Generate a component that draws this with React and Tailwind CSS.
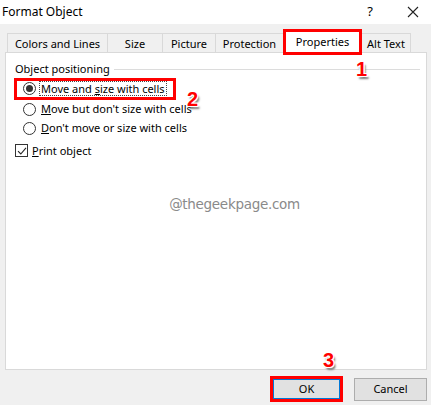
import React from 'react';

const badge = "absolute font-bold text-[20px] leading-none text-[#ff0000] [font-family:'Liberation_Sans',Arial,sans-serif] [text-shadow:1px_1px_0_#fff,-1px_-1px_0_#fff,1px_-1px_0_#fff,-1px_1px_0_#fff,0_1px_0_#fff,1px_0_0_#fff,2px_3px_2px_#777]";

const Tab = ({ label, width }) => (
    <div className={`h-[19px] border border-b-0 border-[#d9d9d9] -ml-px first:ml-0 flex items-center justify-center ${width}`}>
        {label}
    </div>
);

const Radio = ({ checked, children }) => (
    <div className="flex items-center h-[19px] whitespace-nowrap">
        <span className="w-[13px] h-[13px] rounded-full border border-[#333] bg-white flex items-center justify-center ml-[8px] mr-[4px]">
            {checked && <span className="w-[7px] h-[7px] rounded-full bg-[#333]" />}
        </span>
        {children}
    </div>
);

const App = () => {
    return (
        <div className="relative w-[431px] h-[405px] bg-[#f0f0f0] text-[11px] text-black overflow-hidden [font-family:'Noto_Sans','Open_Sans',sans-serif]">
            {/* title bar */}
            <div className="h-[24px] bg-white flex items-center pl-[2px]">
                <span className="text-[12px]">Format Object</span>
                <span className="ml-auto mr-[34px] text-[13px]">?</span>
                <svg width="12" height="12" viewBox="0 0 12 12" className="mr-[12px]">
                    <path d="M1 1L11 11M11 1L1 11" stroke="#222" strokeWidth="1.1" />
                </svg>
            </div>

            {/* tabs */}
            <div className="flex items-end h-[28px] pl-[7px] leading-none">
                <Tab label="Colors and Lines" width="w-[101px]" />
                <Tab label="Size" width="w-[56px]" />
                <Tab label="Picture" width="w-[54px]" />
                <Tab label="Protection" width="w-[69px]" />
                <div className="relative z-10 -ml-px -mb-[3px] w-[79px] h-[26px] bg-white border-[3px] border-[#ff0000] flex items-center justify-center pb-[2px]">
                    Properties
                </div>
                <Tab label="Alt Text" width="w-[50px] -ml-[1px]" />
            </div>

            {/* panel */}
            <div className="ml-[5px] w-[422px] h-[318px] bg-white border border-[#d9d9d9] pt-[8px] pl-[9px] pr-[6px]">
                <div className="flex items-center">
                    <span className="pr-[4px]">Object positioning</span>
                    <span className="flex-1 h-px bg-[#dcdcdc]" />
                </div>
                <div className="mt-0 w-[162px] h-[22px] -ml-[1px] border-[3px] border-[#ff0000] flex items-center whitespace-nowrap">
                    <span className="w-[13px] h-[13px] rounded-full border border-[#333] bg-white flex items-center justify-center ml-[6px] mr-[3px]">
                        <span className="w-[7px] h-[7px] rounded-full bg-[#333]" />
                    </span>
                    <span className="border border-dotted border-[#444] px-px leading-[13px]">
                        Move and <u>s</u>ize with cells
                    </span>
                </div>
                <Radio><span className="ml-px"><u>M</u>ove but don't size with cells</span></Radio>
                <Radio><span className="ml-px"><u>D</u>on't move or size with cells</span></Radio>
                <div className="flex items-center mt-[5px]">
                    <span className="w-[13px] h-[13px] border border-[#333] flex items-center justify-center mr-[4px]">
                        <svg width="10" height="10" viewBox="0 0 10 10">
                            <path d="M1 5.2L3.8 8L9 1.8" fill="none" stroke="#222" strokeWidth="1.1" />
                        </svg>
                    </span>
                    <span><u>P</u>rint object</span>
                </div>
                <div className="mt-[35px] flex justify-center text-[13.5px] text-[#8a8a8a] pl-[34px] [font-family:'DejaVu_Sans',sans-serif] tracking-[-0.3px]">
                    @thegeekpage.com
                </div>
            </div>

            {/* footer */}
            <div className="flex justify-end items-center gap-[11px] pr-[4px] mt-[6px]">
                <div className="w-[73px] h-[26px] border-[3px] border-[#ff0000] flex">
                    <button className="flex-1 bg-[#e1e1e1] border border-[#0078d7]">OK</button>
                </div>
                <button className="w-[73px] h-[23px] bg-[#e1e1e1] border border-[#adadad]">Cancel</button>
            </div>

            <span className={`${badge} left-[356px] top-[59px]`}>1</span>
            <span className={`${badge} left-[187px] top-[89px]`}>2</span>
            <span className={`${badge} left-[323px] top-[350px]`}>3</span>
        </div>
    );
};

export default App;
